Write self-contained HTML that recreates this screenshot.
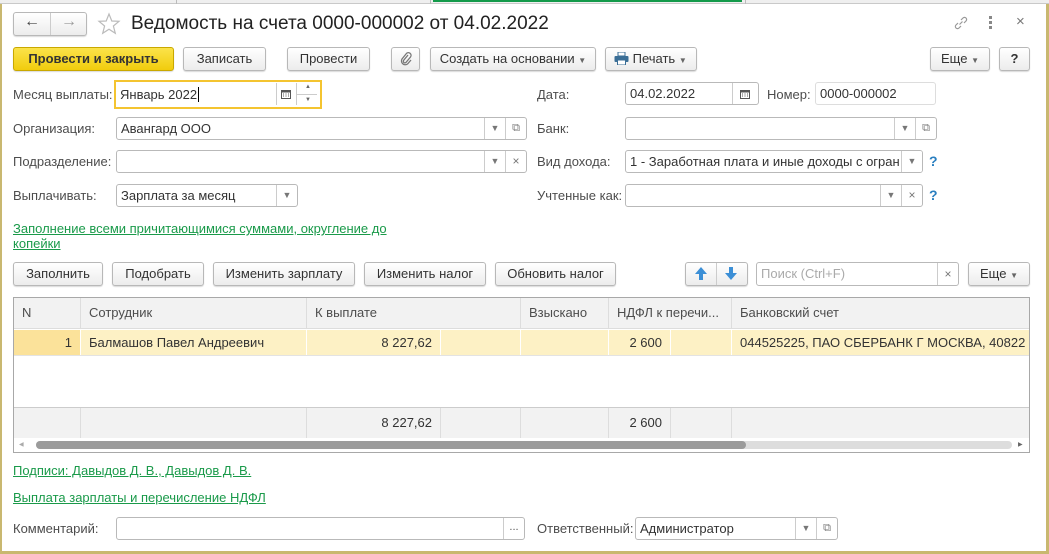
<!DOCTYPE html>
<html><head><meta charset="utf-8"><style>
*{box-sizing:border-box;margin:0;padding:0}
body{width:1049px;height:554px;overflow:hidden;background:#fff;font-family:"Liberation Sans",Arial,sans-serif;font-size:13px;color:#333;position:relative}
.a{position:absolute}
.btn{position:absolute;height:24px;border:1px solid #b8b8b8;border-radius:3px;background:linear-gradient(#fff,#ececec);box-shadow:0 1px 1px rgba(0,0,0,.15);text-align:center;line-height:22px;color:#333;white-space:nowrap}
.inp{position:absolute;height:23px;border:1px solid #b9b9b9;border-radius:3px;background:#fff;line-height:21px;padding-left:4px;white-space:nowrap;overflow:hidden;color:#333}
.lbl{position:absolute;color:#4d4d4d;line-height:16px}
.sb{position:absolute;top:0;height:21px;width:21px;border-left:1px solid #ccc;text-align:center;color:#777;font-size:9px;line-height:21px}
.lnk{position:absolute;color:#1a9a4a;text-decoration:underline;line-height:15px}
.q{position:absolute;color:#2a7fc0;font-size:14px;font-weight:bold}
.cell{position:absolute;border-right:1px solid #ddd;height:100%;top:0;padding:0 8px;white-space:nowrap;overflow:hidden}
.arr{font-size:8px;color:#666}
</style></head><body>
<!-- top strip -->
<div class="a" style="left:0;top:0;width:1049px;height:4px;background:#efefef;border-bottom:1px solid #c9c9c9"></div>
<div class="a" style="left:176px;top:0;width:1px;height:4px;background:#bbb"></div>
<div class="a" style="left:430px;top:0;width:1px;height:4px;background:#bbb"></div>
<div class="a" style="left:745px;top:0;width:1px;height:4px;background:#bbb"></div>
<div class="a" style="left:433px;top:0;width:309px;height:2px;background:#139a4a"></div>
<div class="a" style="left:0;top:4px;width:2px;height:550px;background:#c9b870"></div>
<div class="a" style="left:1046px;top:4px;width:3px;height:550px;background:#c9b870"></div>
<div class="a" style="left:0;top:551px;width:1049px;height:3px;background:#c9b870"></div>

<!-- nav -->
<div class="btn" style="left:13px;top:12px;width:74px;height:24px"></div>
<div class="a" style="left:50px;top:13px;width:1px;height:22px;background:#ccc"></div>
<div class="a" style="left:24px;top:13px;font-size:16px;color:#444;font-weight:bold">&#8592;</div>
<div class="a" style="left:61px;top:13px;font-size:16px;color:#999;font-weight:bold">&#8594;</div>
<svg class="a" style="left:97px;top:12px" width="24" height="24" viewBox="0 0 24 24"><polygon points="12,2 14.8,9 22,9.3 16.4,14 18.3,21.3 12,17.2 5.7,21.3 7.6,14 2,9.3 9.2,9" fill="none" stroke="#bbb" stroke-width="1.2"/></svg>
<div class="a" style="left:131px;top:12px;font-size:19px;color:#222;line-height:24px">Ведомость на счета 0000-000002 от 04.02.2022</div>
<svg class="a" style="left:953px;top:15px" width="16" height="16" viewBox="0 0 16 16"><path d="M6.5 9.5l3-3M5 8l-2 2a2.1 2.1 0 0 0 3 3l2-2M8 5l2-2a2.1 2.1 0 0 1 3 3l-2 2" fill="none" stroke="#999" stroke-width="1.2"/></svg>
<div class="a" style="left:989px;top:16px;width:3px;height:3px;background:#888;box-shadow:0 5px #888,0 10px #888"></div>
<div class="a" style="left:1016px;top:13px;font-size:15px;color:#777">×</div>

<!-- command bar -->
<div class="btn" style="left:13px;top:47px;width:161px;background:linear-gradient(#fbe34a,#f1cc0d);border-color:#c9a800;font-weight:bold;color:#333">Провести и закрыть</div>
<div class="btn" style="left:183px;top:47px;width:83px">Записать</div>
<div class="btn" style="left:287px;top:47px;width:83px">Провести</div>
<div class="btn" style="left:391px;top:47px;width:29px"><svg width="14" height="16" viewBox="0 0 14 16" style="margin-top:3px"><path d="M9 4L4.5 9.5a1.6 1.6 0 0 0 2.4 2L11.5 6a2.7 2.7 0 0 0-4-3.6L3 8a3.8 3.8 0 0 0 5.5 5L12 9" fill="none" stroke="#777" stroke-width="1.3"/></svg></div>
<div class="btn" style="left:430px;top:47px;width:166px">Создать на основании <span class="arr">▼</span></div>
<div class="btn" style="left:605px;top:47px;width:92px;text-align:left;padding-left:8px"><svg width="15" height="13" viewBox="0 0 15 13" style="vertical-align:-2px"><rect x="4" y="0" width="7" height="4" fill="#fff" stroke="#3a6e96"/><rect x="0.5" y="4" width="14" height="6" rx="1" fill="#3a6e96"/><rect x="3.5" y="8" width="8" height="5" fill="#fff" stroke="#3a6e96"/></svg> Печать <span class="arr">▼</span></div>
<div class="btn" style="left:930px;top:47px;width:60px">Еще <span class="arr">▼</span></div>
<div class="btn" style="left:999px;top:47px;width:31px;font-weight:bold">?</div>

<!-- row1 -->
<div class="lbl" style="left:13px;top:87px">Месяц выплаты:</div>
<div class="inp" style="left:114px;top:80px;width:208px;height:29px;border:2px solid #f4c430;border-radius:0;line-height:25px">Январь 2022<span style="border-left:1px solid #000;margin-left:1px"></span></div>
<div class="a" style="left:276px;top:83px;width:1px;height:22px;background:#ccc"></div>
<div class="a" style="left:296px;top:83px;width:1px;height:22px;background:#ccc"></div>
<svg class="a" style="left:281px;top:89px" width="10" height="10" viewBox="0 0 10 10"><rect x="0.5" y="1.5" width="9" height="8" fill="none" stroke="#555"/><rect x="0.5" y="1.5" width="9" height="2" fill="#555"/><path d="M2 5h1M4.5 5h1M7 5h1M2 7h1M4.5 7h1M7 7h1" stroke="#555"/></svg>
<div class="a" style="left:297px;top:94px;width:20px;height:1px;background:#ccc"></div>
<div class="a" style="left:305px;top:84px;font-size:6px;color:#666">▲</div>
<div class="a" style="left:305px;top:97px;font-size:6px;color:#666">▼</div>

<div class="lbl" style="left:537px;top:87px">Дата:</div>
<div class="inp" style="left:625px;top:82px;width:134px">04.02.2022</div>
<div class="a" style="left:732px;top:83px;width:1px;height:21px;background:#ccc"></div>
<svg class="a" style="left:740px;top:89px" width="10" height="10" viewBox="0 0 10 10"><rect x="0.5" y="1.5" width="9" height="8" fill="none" stroke="#555"/><rect x="0.5" y="1.5" width="9" height="2" fill="#555"/><path d="M2 5h1M4.5 5h1M7 5h1M2 7h1M4.5 7h1M7 7h1" stroke="#555"/></svg>
<div class="lbl" style="left:767px;top:87px">Номер:</div>
<div class="inp" style="left:815px;top:82px;width:121px;border-color:#ddd">0000-000002</div>

<!-- row2 -->
<div class="lbl" style="left:13px;top:121px">Организация:</div>
<div class="inp" style="left:116px;top:117px;width:411px">Авангард ООО<div class="sb" style="right:21px">▼</div><div class="sb" style="right:0;font-size:11px">⧉</div></div>
<div class="lbl" style="left:537px;top:121px">Банк:</div>
<div class="inp" style="left:625px;top:117px;width:312px"><div class="sb" style="right:21px">▼</div><div class="sb" style="right:0;font-size:11px">⧉</div></div>

<!-- row3 -->
<div class="lbl" style="left:13px;top:154px">Подразделение:</div>
<div class="inp" style="left:116px;top:150px;width:411px"><div class="sb" style="right:21px">▼</div><div class="sb" style="right:0;font-size:12px">×</div></div>
<div class="lbl" style="left:537px;top:154px">Вид дохода:</div>
<div class="inp" style="left:625px;top:150px;width:298px">1 - Заработная плата и иные доходы с огран<div class="sb" style="right:0;background:#fff">▼</div></div>
<div class="q" style="left:929px;top:153px">?</div>

<!-- row4 -->
<div class="lbl" style="left:13px;top:188px">Выплачивать:</div>
<div class="inp" style="left:116px;top:184px;width:182px">Зарплата за месяц<div class="sb" style="right:0">▼</div></div>
<div class="lbl" style="left:537px;top:188px">Учтенные как:</div>
<div class="inp" style="left:625px;top:184px;width:298px"><div class="sb" style="right:21px">▼</div><div class="sb" style="right:0;font-size:12px">×</div></div>
<div class="q" style="left:929px;top:187px">?</div>

<div class="lnk" style="left:13px;top:221px">Заполнение всеми причитающимися суммами, округление до</div>
<div class="lnk" style="left:13px;top:236px">копейки</div>

<!-- table toolbar -->
<div class="btn" style="left:13px;top:262px;width:90px">Заполнить</div>
<div class="btn" style="left:112px;top:262px;width:92px">Подобрать</div>
<div class="btn" style="left:213px;top:262px;width:142px">Изменить зарплату</div>
<div class="btn" style="left:364px;top:262px;width:122px">Изменить налог</div>
<div class="btn" style="left:495px;top:262px;width:121px">Обновить налог</div>
<div class="btn" style="left:685px;top:262px;width:63px"></div>
<div class="a" style="left:716px;top:263px;width:1px;height:22px;background:#ccc"></div>
<svg class="a" style="left:694px;top:266px" width="14" height="15" viewBox="0 0 14 15"><path d="M7 1L1 8h4v6h4V8h4z" fill="#3c8fd6"/></svg>
<svg class="a" style="left:724px;top:266px" width="14" height="15" viewBox="0 0 14 15"><path d="M7 14L1 7h4V1h4v6h4z" fill="#3c8fd6"/></svg>
<div class="inp" style="left:756px;top:262px;width:203px;height:24px;color:#aaa;line-height:22px">Поиск (Ctrl+F)<div class="sb" style="right:0;font-size:12px;height:22px;line-height:22px">×</div></div>
<div class="btn" style="left:968px;top:262px;width:62px">Еще <span class="arr">▼</span></div>

<!-- table -->
<div class="a" style="left:13px;top:297px;width:1017px;height:156px;border:1px solid #a8a8a8;overflow:hidden">
  <div class="a" style="left:0;top:0;width:1015px;height:31px;background:#f2f2f2;border-bottom:1px solid #ddd;line-height:30px;color:#4d4d4d">
    <div class="cell" style="left:0;width:67px">N</div>
    <div class="cell" style="left:67px;width:226px">Сотрудник</div>
    <div class="cell" style="left:293px;width:214px">К выплате</div>
    <div class="cell" style="left:507px;width:88px">Взыскано</div>
    <div class="cell" style="left:595px;width:123px">НДФЛ к перечи...</div>
    <div class="cell" style="left:718px;width:297px;border:0">Банковский счет</div>
  </div>
  <div class="a" style="left:0;top:32px;width:1015px;height:26px;background:#fdf1c5;border-bottom:1px solid #e3e3e3;line-height:26px">
    <div class="cell" style="left:0;width:67px;background:#fbe29a;text-align:right;border-color:#fff">1</div>
    <div class="cell" style="left:67px;width:226px;border-color:#fff">Балмашов Павел Андреевич</div>
    <div class="cell" style="left:293px;width:134px;text-align:right;border-color:#fff">8 227,62</div>
    <div class="cell" style="left:427px;width:80px;border-color:#fff"></div>
    <div class="cell" style="left:507px;width:88px;border-color:#fff"></div>
    <div class="cell" style="left:595px;width:62px;text-align:right;border-color:#fff">2 600</div>
    <div class="cell" style="left:657px;width:61px;border-color:#fff"></div>
    <div class="cell" style="left:718px;width:297px;border:0">044525225, ПАО СБЕРБАНК Г МОСКВА, 40822</div>
  </div>
  <div class="a" style="left:0;top:109px;width:1015px;height:31px;background:#f2f2f2;border-top:1px solid #ccc;line-height:29px">
    <div class="cell" style="left:0;width:67px"></div>
    <div class="cell" style="left:67px;width:226px"></div>
    <div class="cell" style="left:293px;width:134px;text-align:right">8 227,62</div>
    <div class="cell" style="left:427px;width:80px"></div>
    <div class="cell" style="left:507px;width:88px"></div>
    <div class="cell" style="left:595px;width:62px;text-align:right">2 600</div>
    <div class="cell" style="left:657px;width:61px"></div>
  </div>
  <div class="a" style="left:0;top:140px;width:1015px;height:14px;background:#fff"></div>
  <div class="a" style="left:5px;top:143px;font-size:6px;color:#aaa">◀</div>
  <div class="a" style="left:22px;top:143px;width:976px;height:8px;border-radius:4px;background:#ddd"></div>
  <div class="a" style="left:22px;top:143px;width:710px;height:8px;border-radius:4px;background:#9b9b9b"></div>
  <div class="a" style="left:1004px;top:143px;font-size:6px;color:#666">▶</div>
</div>

<div class="lnk" style="left:13px;top:463px">Подписи: Давыдов Д. В., Давыдов Д. В.</div>
<div class="lnk" style="left:13px;top:490px">Выплата зарплаты и перечисление НДФЛ</div>

<div class="lbl" style="left:13px;top:521px">Комментарий:</div>
<div class="inp" style="left:116px;top:517px;width:409px"><div class="sb" style="right:0;font-size:11px;color:#555;line-height:19px">...</div></div>
<div class="lbl" style="left:537px;top:521px">Ответственный:</div>
<div class="inp" style="left:635px;top:517px;width:203px">Администратор<div class="sb" style="right:21px">▼</div><div class="sb" style="right:0;font-size:11px">⧉</div></div>
</body></html>
